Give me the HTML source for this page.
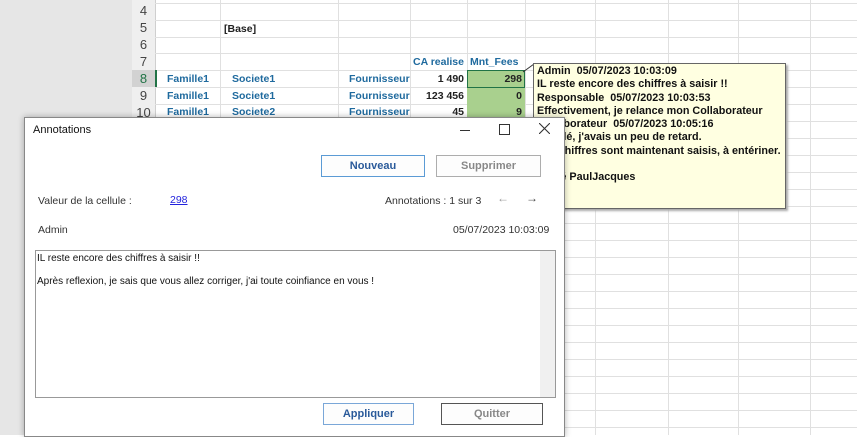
<!DOCTYPE html>
<html><head><style>
body{margin:0;width:857px;height:435px;overflow:hidden;background:#fff;font-family:"Liberation Sans",sans-serif;position:relative}
.a{position:absolute}
.c{position:absolute;font-size:10.5px;font-weight:bold;color:#1f6a9e;white-space:nowrap}
.rh{position:absolute;left:132px;width:23px;text-align:center;font-size:13px;color:#444}
.t{font-family:"Liberation Sans",sans-serif;font-size:10.5px;color:#333;position:absolute;white-space:nowrap}
.btn{position:absolute;border:1px solid #adadad;background:#fdfdfd;font-size:11px;font-weight:bold;text-align:center;color:#888;box-sizing:border-box}
</style></head><body>
<div class="a" style="left:0;top:0;width:132px;height:435px;background:#e6e6e6"></div>
<div class="a" style="left:132px;top:0;width:23px;height:435px;background:#efefef;border-right:1px solid #cfcfcf"></div>
<svg class="a" style="left:155px;top:0" width="702" height="435">
<g stroke="#e0e0e0" stroke-width="1">
<line x1="0" y1="3.5" x2="702" y2="3.5"/><line x1="0" y1="20.5" x2="702" y2="20.5"/><line x1="0" y1="37.5" x2="702" y2="37.5"/><line x1="0" y1="53.5" x2="702" y2="53.5"/><line x1="0" y1="70.5" x2="702" y2="70.5"/><line x1="0" y1="87.5" x2="702" y2="87.5"/><line x1="0" y1="104.5" x2="702" y2="104.5"/>
<line x1="0" y1="121.5" x2="702" y2="121.5"/><line x1="0" y1="138.5" x2="702" y2="138.5"/><line x1="0" y1="155.5" x2="702" y2="155.5"/><line x1="0" y1="172.5" x2="702" y2="172.5"/><line x1="0" y1="189.5" x2="702" y2="189.5"/><line x1="0" y1="206.5" x2="702" y2="206.5"/><line x1="0" y1="223.5" x2="702" y2="223.5"/><line x1="0" y1="240.5" x2="702" y2="240.5"/><line x1="0" y1="257.5" x2="702" y2="257.5"/><line x1="0" y1="274.5" x2="702" y2="274.5"/><line x1="0" y1="291.5" x2="702" y2="291.5"/><line x1="0" y1="308.5" x2="702" y2="308.5"/><line x1="0" y1="325.5" x2="702" y2="325.5"/><line x1="0" y1="342.5" x2="702" y2="342.5"/><line x1="0" y1="359.5" x2="702" y2="359.5"/><line x1="0" y1="376.5" x2="702" y2="376.5"/><line x1="0" y1="393.5" x2="702" y2="393.5"/><line x1="0" y1="410.5" x2="702" y2="410.5"/><line x1="0" y1="427.5" x2="702" y2="427.5"/>
<line x1="65.5" y1="0" x2="65.5" y2="435"/><line x1="183.5" y1="0" x2="183.5" y2="435"/><line x1="255.5" y1="0" x2="255.5" y2="435"/><line x1="312.5" y1="0" x2="312.5" y2="435"/><line x1="370.5" y1="0" x2="370.5" y2="435"/><line x1="440.5" y1="0" x2="440.5" y2="435"/><line x1="513.5" y1="0" x2="513.5" y2="435"/><line x1="583.5" y1="0" x2="583.5" y2="435"/><line x1="655.5" y1="0" x2="655.5" y2="435"/>
</g></svg>
<div class="a" style="left:467px;top:71px;width:58px;height:50px;background:#a9d08e"></div>
<div class="a" style="left:467px;top:70px;width:56px;height:16px;border:1px solid #217346"></div>
<div class="a" style="left:132px;top:70px;width:23px;height:17px;background:#d2d2d2;border-right:2px solid #217346"></div>
<div class="rh" style="top:3px">4</div><div class="rh" style="top:20px">5</div><div class="rh" style="top:37px">6</div><div class="rh" style="top:54px">7</div><div class="rh" style="top:71px;color:#217346">8</div><div class="rh" style="top:88px">9</div><div class="rh" style="top:105px">10</div>
<div class="c" style="left:224px;top:23px;color:#222">[Base]</div>
<div class="c" style="left:413px;top:56px">CA realise</div><div class="c" style="left:470px;top:56px">Mnt_Fees</div>
<div class="c" style="left:167px;top:73px">Famille1</div><div class="c" style="left:232px;top:73px">Societe1</div><div class="c" style="left:349px;top:73px">Fournisseur</div><div class="c" style="left:410px;top:73px;width:54px;text-align:right;color:#222">1 490</div><div class="c" style="left:467px;top:73px;width:55px;text-align:right;color:#222">298</div>
<div class="c" style="left:167px;top:90px">Famille1</div><div class="c" style="left:232px;top:90px">Societe1</div><div class="c" style="left:349px;top:90px">Fournisseur</div><div class="c" style="left:410px;top:90px;width:54px;text-align:right;color:#222">123 456</div><div class="c" style="left:467px;top:90px;width:55px;text-align:right;color:#222">0</div>
<div class="c" style="left:167px;top:106px">Famille1</div><div class="c" style="left:232px;top:106px">Societe2</div><div class="c" style="left:349px;top:106px">Fournisseur</div><div class="c" style="left:410px;top:106px;width:54px;text-align:right;color:#222">45</div><div class="c" style="left:467px;top:106px;width:55px;text-align:right;color:#222">9</div>
<svg class="a" style="left:520px;top:60px" width="20" height="20"><line x1="3" y1="12" x2="14" y2="4" stroke="#333"/></svg>
<div class="a" style="left:533px;top:63px;width:253px;height:146px;background:#ffffe1;border:1px solid #666;box-shadow:2px 2px 2px #aaa;font-family:'Liberation Sans',sans-serif;font-weight:bold;font-size:10.8px;line-height:13.3px;padding:1px 3px;box-sizing:border-box;color:#111;white-space:nowrap">Admin&nbsp; 05/07/2023 10:03:09<br>IL reste encore des chiffres à saisir !!<br>Responsable&nbsp; 05/07/2023 10:03:53<br>Effectivement, je relance mon Collaborateur<br>Collaborateur&nbsp; 05/07/2023 10:05:16<br>Désolé, j'avais un peu de retard.<br>Les chiffres sont maintenant saisis, à entériner.<br><br>Signé PaulJacques</div>
<!-- dialog -->
<div class="a" style="left:24px;top:117px;width:541px;height:320px;background:#fff;border:1px solid #888;box-sizing:border-box;box-shadow:0 0 6px rgba(0,0,0,.3)"></div>
<div class="t" style="left:33px;top:124px;color:#111;font-size:11px">Annotations</div>
<div class="a" style="left:460px;top:130px;width:10px;height:1px;background:#333"></div>
<div class="a" style="left:499px;top:124px;width:9px;height:9px;border:1px solid #333"></div>
<svg class="a" style="left:539px;top:123px" width="11" height="11"><path d="M0 0L11 11M11 0L0 11" stroke="#333" stroke-width="1.1"/></svg>
<div class="btn" style="left:321px;top:155px;width:104px;height:22px;border-color:#5b9bd5;color:#2a5a9a;line-height:20px">Nouveau</div>
<div class="btn" style="left:436px;top:155px;width:105px;height:22px;line-height:20px">Supprimer</div>
<div class="t" style="left:38px;top:195px">Valeur de la cellule :</div>
<div class="t" style="left:170px;top:194px;color:#2222dd;text-decoration:underline">298</div>
<div class="t" style="left:385px;top:195px">Annotations : 1 sur 3</div>
<div class="t" style="left:497px;top:191px;color:#999;font-size:12px">←</div>
<div class="t" style="left:526px;top:191px;color:#444;font-size:12px">→</div>
<div class="t" style="left:38px;top:224px">Admin</div>
<div class="t" style="left:453px;top:224px">05/07/2023 10:03:09</div>
<div class="a" style="left:35px;top:250px;width:521px;height:148px;border:1px solid #999;box-sizing:border-box"></div>
<div class="a" style="left:540px;top:251px;width:15px;height:146px;background:#f0f0f0"></div>
<div class="t" style="left:37px;top:253px;color:#111;font-size:10px">IL reste encore des chiffres à saisir !!</div>
<div class="t" style="left:37px;top:276px;color:#111;font-size:10px">Après reflexion, je sais que vous allez corriger, j'ai toute coinfiance en vous !</div>
<div class="btn" style="left:323px;top:403px;width:91px;height:22px;border-color:#7aa7d8;color:#2a5a9a;line-height:20px">Appliquer</div>
<div class="btn" style="left:441px;top:403px;width:102px;height:22px;border-color:#555;line-height:20px">Quitter</div>
</body></html>
